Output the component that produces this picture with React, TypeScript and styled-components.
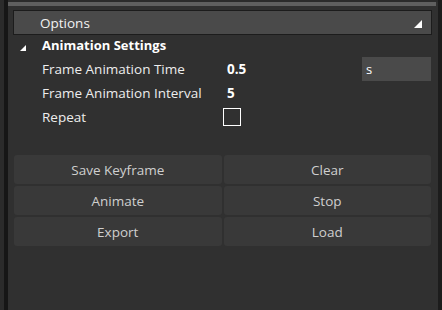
import styled, { createGlobalStyle } from "styled-components";

const GlobalStyle = createGlobalStyle`
  html, body {
    margin: 0;
    padding: 0;
    background: #2b2b2b;
    font-family: "Open Sans", "Noto Sans", sans-serif;
  }
`;

const buttons = [
  ["Save Keyframe", "Clear"],
  ["Animate", "Stop"],
  ["Export", "Load"],
];

export default function App() {
  return (
    <>
      <GlobalStyle />
      <Frame>
        <Gutter />
        <Panel>
          <TopBar />
          <Header>
            <HeaderTitle>Options</HeaderTitle>
            <Corner />
          </Header>
          <Section>
            <SectionTitle>
              <SmallCorner />
              Animation Settings
            </SectionTitle>
            <Row>
              <Label>Frame Animation Time</Label>
              <Value>0.5</Value>
              <UnitInput>s</UnitInput>
            </Row>
            <Row>
              <Label>Frame Animation Interval</Label>
              <Value>5</Value>
            </Row>
            <Row>
              <Label>Repeat</Label>
              <Checkbox />
            </Row>
          </Section>
          <ButtonGrid>
            {buttons.flat().map((b) => (
              <Button key={b}>{b}</Button>
            ))}
          </ButtonGrid>
        </Panel>
        <RightEdge />
      </Frame>
    </>
  );
}

const Frame = styled.div`
  display: flex;
  width: 442px;
  height: 310px;
  overflow: hidden;
  background: #2b2b2b;
`;

const Gutter = styled.div`
  width: 4px;
  margin-left: 4px;
  background: #161616;
`;

const RightEdge = styled.div`
  width: 4px;
  background: #1c1c1c;
`;

const Panel = styled.div`
  flex: 1;
  display: flex;
  flex-direction: column;
  background: #303030;
  border-top: 2px solid #2b2b2b;
`;

const TopBar = styled.div`
  height: 4px;
  margin-right: 2px;
  background: #5f5f5f;
`;

const Header = styled.div`
  margin: 4px 6px 0 5px;
  height: 23px;
  display: flex;
  align-items: center;
  justify-content: space-between;
  background: #4a4a4a;
  border: 1px solid #1c1c1c;
  padding: 0 9px 0 26px;
`;

const HeaderTitle = styled.span`
  color: #f2f2f2;
  font-size: 13.5px;
`;

const Corner = styled.div`
  width: 0;
  height: 0;
  margin-top: 3px;
  border-left: 8px solid transparent;
  border-bottom: 8px solid #ffffff;
`;

const SmallCorner = styled.div`
  width: 0;
  height: 0;
  margin: 6px 16px 0 0;
  border-left: 6px solid transparent;
  border-bottom: 6px solid #ffffff;
`;

const Section = styled.div`
  display: flex;
  flex-direction: column;
  padding: 0 7px 0 12px;
`;

const SectionTitle = styled.div`
  display: flex;
  align-items: center;
  height: 20px;
  margin-bottom: 2px;
  color: #ffffff;
  font-weight: 700;
  font-size: 13px;
`;

const Row = styled.div`
  display: grid;
  grid-template-columns: 185px 135px 69px;
  align-items: center;
  height: 24px;
  padding-left: 22px;
`;

const Label = styled.span`
  color: #ededed;
  font-size: 13.5px;
`;

const Value = styled.span`
  color: #ffffff;
  font-weight: 700;
  font-size: 13.5px;
`;

const UnitInput = styled.div`
  height: 24px;
  box-sizing: border-box;
  background: #4a4a4a;
  color: #ffffff;
  font-size: 13px;
  padding: 3px 4px;
`;

const Checkbox = styled.div`
  width: 18px;
  height: 18px;
  box-sizing: border-box;
  margin-left: -4px;
  border: 1px solid #ffffff;
`;

const ButtonGrid = styled.div`
  display: grid;
  grid-template-columns: 1fr 1fr;
  gap: 2px;
  margin: 26px 7px 0 6px;
`;

const Button = styled.div`
  height: 29px;
  display: flex;
  align-items: center;
  justify-content: center;
  background: #393939;
  border-radius: 3px;
  color: #cfcfcf;
  font-size: 13.5px;
`;
